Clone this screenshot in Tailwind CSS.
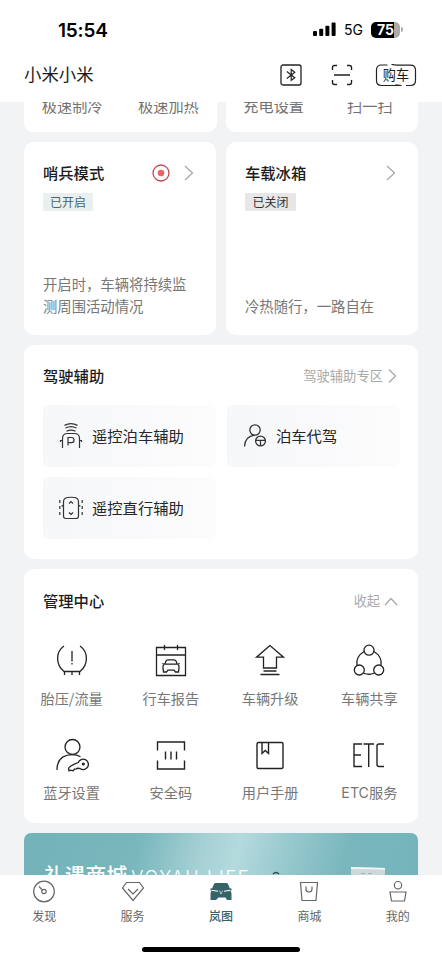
<!DOCTYPE html>
<html lang="zh-CN">
<head>
<meta charset="utf-8">
<title>岚图</title>
<script src="https://cdn.jsdelivr.net/npm/@tailwindcss/browser@4"></script>
</head>
<body class="bg-white">
<div class="flex h-[960px] w-[442px] flex-col overflow-hidden bg-white font-['Noto_Sans_CJK_SC',sans-serif] text-[#1c1c1c]">

  <!-- Status bar and title -->
  <header class="flex h-[102px] shrink-0 flex-col">
    <div class="flex h-[48px] items-end justify-between pr-[39px] pl-[58px]">
      <span class="mb-[5px] font-['Inter',sans-serif] text-[19px] leading-6 font-semibold tracking-[-0.2px] text-black">15:54</span>
      <div class="mb-[10px] flex items-center">
        <svg class="h-[15px] w-[23px]" viewBox="0 0 23 15" fill="#000"><rect x="0" y="9" width="4" height="5" rx="1"/><rect x="6.2" y="6.8" width="4" height="7.2" rx="1"/><rect x="12.4" y="3.7" width="4" height="10.3" rx="1"/><rect x="18.6" y="0.6" width="4" height="13.4" rx="1"/></svg>
        <span class="mt-px ml-[8px] w-[19px] font-['Inter',sans-serif] text-[14px] leading-4 text-black">5G</span>
        <div class="ml-[8px] flex h-[16px] w-[29px] items-center justify-center rounded-[5px] bg-linear-to-r from-black from-78% to-[#ababab] to-78% font-['Inter',sans-serif] text-[14px] leading-4 font-bold text-white">75</div>
        <div class="ml-px h-[5px] w-[2px] rounded-r bg-[#ababab]"></div>
      </div>
    </div>
    <div class="flex h-[54px] items-center justify-between pr-[25px] pl-[24px]">
      <h1 class="-mt-[2px] text-[17.4px] font-normal">小米小米</h1>
      <div class="flex items-center">
        <svg class="h-[22px] w-[22px]" viewBox="0 0 22 22" fill="none" stroke="#222" stroke-width="1.3"><rect x="1" y="1" width="20" height="20" rx="2"/><path d="M6.8 7.500l8 6.200-3.600 2.600V5.500l3.600 2.700-8 6.300" stroke-width="1.200"/></svg>
        <svg class="ml-[29px] h-[22px] w-[22px]" viewBox="0 0 22 22" fill="none" stroke="#222" stroke-width="1.4"><path d="M1.5 6V3.5q0-2 2-2H6M16 1.500h2.500q2 0 2 2V6M1.500 16v2.500q0 2 2 2H6M16 20.500h2.500q2 0 2-2V16M3 11h16"/></svg>
        <div class="relative ml-[22px] flex h-[23px] w-[42px] items-center justify-center text-[13.200px]">
          <svg class="absolute inset-0 h-[23px] w-[42px]" viewBox="0 0 42 23" fill="none" stroke="#222" stroke-width="1.200"><path d="M12.500 1H6.500Q1.500 1 1.500 6v10.500q0 5 5 5H26.500l-6-.7M16.500 .5l5 .6H35.500q5 0 5 5v10.400q0 5-5 5H31"/></svg>
          <span class="-mt-px">购车</span>
        </div>
      </div>
    </div>
  </header>

  <main class="flex min-h-0 flex-1 flex-col gap-[10px] overflow-hidden bg-[#f1f3f5] px-[24px]">
    <!-- Quick actions, scrolled partly under the header -->
    <section class="grid h-[30px] shrink-0 grid-cols-2 gap-[9px] text-[15.2px] leading-[20px] text-[#737373]">
      <div class="grid grid-cols-2 overflow-hidden rounded-b-[9px] bg-white text-center"><span class="-mt-[7px]">极速制冷</span><span class="-mt-[7px]">极速加热</span></div>
      <div class="grid grid-cols-2 overflow-hidden rounded-b-[9px] bg-white text-center"><span class="-mt-[7px]">充电设置</span><span class="-mt-[7px]">扫一扫</span></div>
    </section>

    <section class="grid h-[193px] shrink-0 grid-cols-2 gap-[10px]">
      <article class="flex flex-col rounded-[10px] bg-white px-[19px] pt-[19px] pb-[18px]">
        <div class="flex h-[24px] items-center">
          <h2 class="-mt-px text-[15.3px] font-medium">哨兵模式</h2>
          <svg class="ml-auto h-[18px] w-[18px]" viewBox="0 0 18 18"><circle cx="9" cy="9" r="8" fill="none" stroke="#c8484a" stroke-width="1.300"/><circle cx="9" cy="9" r="3.300" fill="#df6862"/></svg>
          <svg class="mr-[3px] ml-[14px] h-[16px] w-[10px]" viewBox="0 0 10 16" fill="none" stroke="#a5a5a5" stroke-width="1.200"><path d="M1 1l7.500 7L1 15"/></svg>
        </div>
        <span class="mt-[8px] flex h-[18px] w-[50px] items-center justify-center bg-[#eaeff0] text-[12px] text-[#48666a]">已开启</span>
        <p class="mt-auto text-[14.350px] leading-[22px] whitespace-nowrap text-[#777]">开启时，车辆将持续监<br>测周围活动情况</p>
      </article>
      <article class="flex flex-col rounded-[10px] bg-white px-[19px] pt-[19px] pb-[18px]">
        <div class="flex h-[24px] items-center justify-between">
          <h2 class="-mt-px text-[15.3px] font-medium">车载冰箱</h2>
          <svg class="mr-[3px] h-[16px] w-[10px]" viewBox="0 0 10 16" fill="none" stroke="#a5a5a5" stroke-width="1.200"><path d="M1 1l7.500 7L1 15"/></svg>
        </div>
        <span class="mt-[8px] flex h-[18px] w-[51px] items-center justify-center rounded-[1px] bg-[#e7e7e7] text-[12px] text-[#333]">已关闭</span>
        <p class="mt-auto text-[14.350px] leading-[22px] text-[#777]">冷热随行，一路自在</p>
      </article>
    </section>

    <!-- Driving assistance -->
    <section class="h-[214px] shrink-0 rounded-[10px] bg-white pt-[19px] pr-[18px] pl-[19px]">
      <div class="flex h-[24px] items-center">
        <h2 class="-mt-[2px] text-[15.300px] font-medium">驾驶辅助</h2>
        <span class="ml-auto text-[13.300px] text-[#aaa]">驾驶辅助专区</span>
        <svg class="mr-[3px] ml-[5px] h-[16px] w-[9px]" viewBox="0 0 9 16" fill="none" stroke="#a5a5a5" stroke-width="1.200"><path d="M1 1.500l6.500 6.500L1 14.500"/></svg>
      </div>
      <div class="mt-[17px] grid grid-cols-2 gap-x-[11px] gap-y-[10px] text-[15.300px] text-[#262626]">
        <div class="flex h-[62px] items-center rounded-[6px] bg-linear-to-r from-[#f6f7f9] to-[#fcfcfd] pl-[16px]">
          <svg class="mr-[9px] h-[26px] w-[24px]" viewBox="0 0 24 26" fill="none" stroke="#333" stroke-width="1.200"><path d="M3.500 25V15.500Q3.500 10.500 8.500 10.500h7q5 0 5 5V25M1.500 19v-1.500h2M22.500 19v-1.500h-2M9 22.500v-8h3.500q2.500 0 2.500 2.600t-2.500 2.600H9M7.500 8.300q4.500-2.500 9 0M6.500 5.100q5.500-3.100 11 0M5.500 2.400q6.500-3.400 13 0"/></svg>
          <span class="-mt-[2px]">遥控泊车辅助</span>
        </div>
        <div class="flex h-[62px] items-center rounded-[6px] bg-linear-to-r from-[#f6f7f9] to-[#fcfcfd] pl-[16px]">
          <svg class="mr-[9px] h-[24px] w-[24px]" viewBox="0 0 24 24" fill="none" stroke="#333" stroke-width="1.300"><circle cx="12" cy="6" r="5.200"/><path d="M1.500 22.500q.5-10 10-11.300"/><circle cx="17.500" cy="17" r="4.900"/><path d="M12.600 16.300h9.800M17.500 16.500v5.400"/></svg>
          <span class="-mt-[2px]">泊车代驾</span>
        </div>
        <div class="flex h-[62px] items-center rounded-[6px] bg-linear-to-r from-[#f6f7f9] to-[#fcfcfd] pl-[16px]">
          <svg class="mr-[9px] h-[24px] w-[24px]" viewBox="0 0 24 24" fill="none" stroke="#333" stroke-width="1.200"><path d="M4.500 6q0-4 4-4.500 3.500-.5 7 0 4 .5 4 4.500v14q0 2.500-2.500 2.500H7q-2.500 0-2.500-2.500zM2.500 10l2-.8M21.500 10l-2-.8M10 7.500l2-2 2 2M10 16.500l2 2 2-2"/><path d="M.8 4v17M23.200 4v17" stroke-dasharray="3 3"/></svg>
          <span class="-mt-[2px]">遥控直行辅助</span>
        </div>
      </div>
    </section>

    <!-- Management centre -->
    <section class="h-[254px] shrink-0 rounded-[10px] bg-white pt-[20px]">
      <div class="flex h-[24px] items-center pr-[20px] pl-[19px]">
        <h2 class="-mt-[2px] text-[15.300px] font-medium">管理中心</h2>
        <span class="ml-auto text-[13.200px] text-[#aaa]">收起</span>
        <svg class="ml-[4px] h-[9px] w-[14px]" viewBox="0 0 14 9" fill="none" stroke="#a5a5a5" stroke-width="1.200"><path d="M1 8l6-6.500L13 8"/></svg>
      </div>
      <div class="-mr-px -ml-[2px] mt-[30px] grid grid-cols-4 gap-y-[8px] text-[14.200px] leading-[22px] text-[#777]">
        <div class="flex h-[86px] flex-col items-center gap-[10px]">
          <svg class="h-[34px] w-[34px]" viewBox="0 0 34 34" fill="none" stroke="#222" stroke-width="1.300"><path d="M9 3C.5 9 .500 21.500 9 28.500h16C33.500 21.500 33.500 9 25 3M9.500 28.500v3.500M17 28.500v3.500M24.500 28.500v3.500M17 8v10.500M17 20v1.500"/></svg>
          <span>胎压/流量</span>
        </div>
        <div class="flex h-[86px] flex-col items-center gap-[10px]">
          <svg class="h-[34px] w-[34px]" viewBox="0 0 34 34" fill="none" stroke="#222" stroke-width="1.300"><path d="M2.500 4.500h29v28h-29zM2.500 12h29M10.500 2v5M23.500 2v5M11 20.500l1-2.500q.5-1.200 2-1.200h6q1.500 0 2 1.200l1 2.500M8.500 20.200q.5 1 2.500 1h12q2 0 2.500-1M10 21.200q-1.500 1.300-1 4l.5 3.800h3l1.500-1.800h6l1.500 1.800h3l.5-3.800q.5-2.700-1-4"/></svg>
          <span>行车报告</span>
        </div>
        <div class="flex h-[86px] flex-col items-center gap-[10px]">
          <svg class="h-[34px] w-[34px]" viewBox="0 0 34 34" fill="none" stroke="#222" stroke-width="1.300"><path d="M17 2.500L3.500 14.200h7V25h13V14.200h7zM10.500 28h13M7.500 31.500h19"/></svg>
          <span>车辆升级</span>
        </div>
        <div class="flex h-[86px] flex-col items-center gap-[10px]">
          <svg class="h-[34px] w-[34px]" viewBox="0 0 34 34" fill="none" stroke="#222" stroke-width="1.300"><circle cx="17" cy="7.200" r="5"/><circle cx="7.300" cy="27" r="5"/><circle cx="26.700" cy="27" r="5"/><path d="M12.200 8.500Q3.500 13.500 5 22.500M21.800 8.500Q30.500 13.500 29 22.500M11.500 30q5.500 2.500 11 0"/></svg>
          <span>车辆共享</span>
        </div>
        <div class="flex h-[86px] flex-col items-center gap-[9px] pt-px">
          <svg class="h-[34px] w-[34px]" viewBox="0 0 34 34" fill="none" stroke="#222" stroke-width="1.300"><circle cx="17.500" cy="9" r="7.500"/><path d="M2 32Q2 17 17.500 16.700q4.500 0 8 2"/><path d="M23.300 24.500a5.200 5.200 0 1 1 2 6.200q-3-1-4 .3l-1.800.2-1.500 1.600-2.500-.6-1.500.6-.5-2.300q.5-2.300 9.800-6z" fill="#fff"/><circle cx="28.300" cy="26" r=".9" fill="#222"/></svg>
          <span>蓝牙设置</span>
        </div>
        <div class="flex h-[86px] flex-col items-center gap-[9px] pt-px">
          <svg class="h-[34px] w-[34px]" viewBox="0 0 34 34" fill="none" stroke="#222" stroke-width="1.400"><path d="M3.500 12.500V4h27v8.500M3.500 22.500V31h27v-8.500M11.500 13.500v8M17 13.500v8M22.500 13.500v8"/></svg>
          <span>安全码</span>
        </div>
        <div class="flex h-[86px] flex-col items-center gap-[9px] pt-px">
          <svg class="h-[34px] w-[34px]" viewBox="0 0 34 34" fill="none" stroke="#222" stroke-width="1.400"><rect x="4" y="4.500" width="26" height="26" rx="1.500"/><path d="M9 4.500v11l3.200-3 3.300 3v-11"/></svg>
          <span>用户手册</span>
        </div>
        <div class="flex h-[86px] flex-col items-center gap-[9px] pt-px">
          <svg class="h-[34px] w-[34px]" viewBox="0 0 34 34" fill="none" stroke="#222" stroke-width="1.400"><path d="M10 6H2v22.500h8M2 17h7M11.500 6h10.500M16.700 6v23M32 6h-5q-2 0-2 2v18.500q0 2 2 2h5"/></svg>
          <span><span class="font-['Inter',sans-serif]">ETC</span>服务</span>
        </div>
      </div>
    </section>

    <!-- Gift mall banner -->
    <section class="flex h-[100px] shrink-0 items-start rounded-t-[7px] bg-[linear-gradient(105deg,#72b2b8_0%,#79b7bc_28%,#a5d0d4_43%,#b4dadd_52%,#9bcbd0_62%,#79b7bd_78%,#72b4bb_100%)] pt-[27px] pl-[20px] text-white">
      <span class="text-[20.800px] leading-[28px] font-medium">礼遇商城</span>
      <span class="mt-[8px] ml-[4px] w-[120px] font-['Inter',sans-serif] text-[18px] leading-[20px] font-light tracking-[1.700px] whitespace-nowrap">VOYAH LIFE</span>
      <svg class="mt-[10px] ml-[21px] h-[10px] w-[8px]" viewBox="0 0 8 10" fill="none" stroke="#2d4a50" stroke-width="1.500"><path d="M1 4q3-3 6 0"/></svg>
      <svg class="mt-[5px] ml-[70px] h-[30px] w-[36px]" viewBox="0 0 36 30"><path d="M1 2l34 1v27H1z" fill="#cfd8da"/><path d="M1 2l34 1v1.500L1 4z" fill="#f3f6f6"/><path d="M11 8.500h4M18 8.500h4" stroke="#a3b0b3"/></svg>
    </section>
  </main>

  <nav class="flex h-[85px] shrink-0 flex-col items-center bg-white">
    <div class="grid w-full grid-cols-5 text-[12px] leading-[18px] text-[#666]">
      <div class="flex flex-col items-center gap-[3px] pt-[5px]">
        <svg class="h-[24px] w-[24px]" viewBox="0 0 24 24" fill="none" stroke="#666" stroke-width="1.200"><circle cx="12" cy="11.500" r="10.300"/><circle cx="12" cy="11.500" r="2.200"/><path d="M10.300 10L7 6.500"/></svg>
        <span>发现</span>
      </div>
      <div class="flex flex-col items-center gap-[3px] pt-[5px]">
        <svg class="h-[24px] w-[24px]" viewBox="0 0 24 24" fill="none" stroke="#666" stroke-width="1.200"><path d="M5.500 2.500h13l4 5.500L12 20.500 1.500 8zM7 9l5 5 5-5"/></svg>
        <span>服务</span>
      </div>
      <div class="flex flex-col items-center gap-[3px] pt-[5px] font-medium text-[#36636a]">
        <svg class="h-[24px] w-[24px]" viewBox="0 0 24 24"><path d="M6.500 3h11q1 0 1.500 1l1.800 4.200 1.700.3v2l-1 .5q1 1 1 3V20h-4.500l-1.500-2.500h-7L7 20H1.500v-6q0-2 1-3l-1-.5v-2l1.700-.3L5 4q.5-1 1.500-1z" fill="#36636a"/><path d="M2.500 10.300l6.500 1M21.500 10.300l-6.500 1" fill="none" stroke="#fff" stroke-width="1.100"/><path d="M10.500 10.500l1.500 3.500 1.500-3.500" fill="none" stroke="#dfe9ea" stroke-width=".7"/></svg>
        <span>岚图</span>
      </div>
      <div class="flex flex-col items-center gap-[3px] pt-[5px]">
        <svg class="h-[24px] w-[24px]" viewBox="0 0 24 24" fill="none" stroke="#666" stroke-width="1.200"><path d="M3.500 2.500h17l-1.500 18H5zM9 6.500V9q0 3 3 3t3-3V6.500"/></svg>
        <span>商城</span>
      </div>
      <div class="flex flex-col items-center gap-[3px] pt-[5px]">
        <svg class="h-[24px] w-[24px]" viewBox="0 0 24 24" fill="none" stroke="#666" stroke-width="1.200"><circle cx="12" cy="5.200" r="3.700"/><path d="M4 12h16l-1.500 9h-13z"/></svg>
        <span>我的</span>
      </div>
    </div>
    <div class="mt-[22px] h-[5px] w-[158px] rounded-full bg-black"></div>
  </nav>
</div>
</body>
</html>
